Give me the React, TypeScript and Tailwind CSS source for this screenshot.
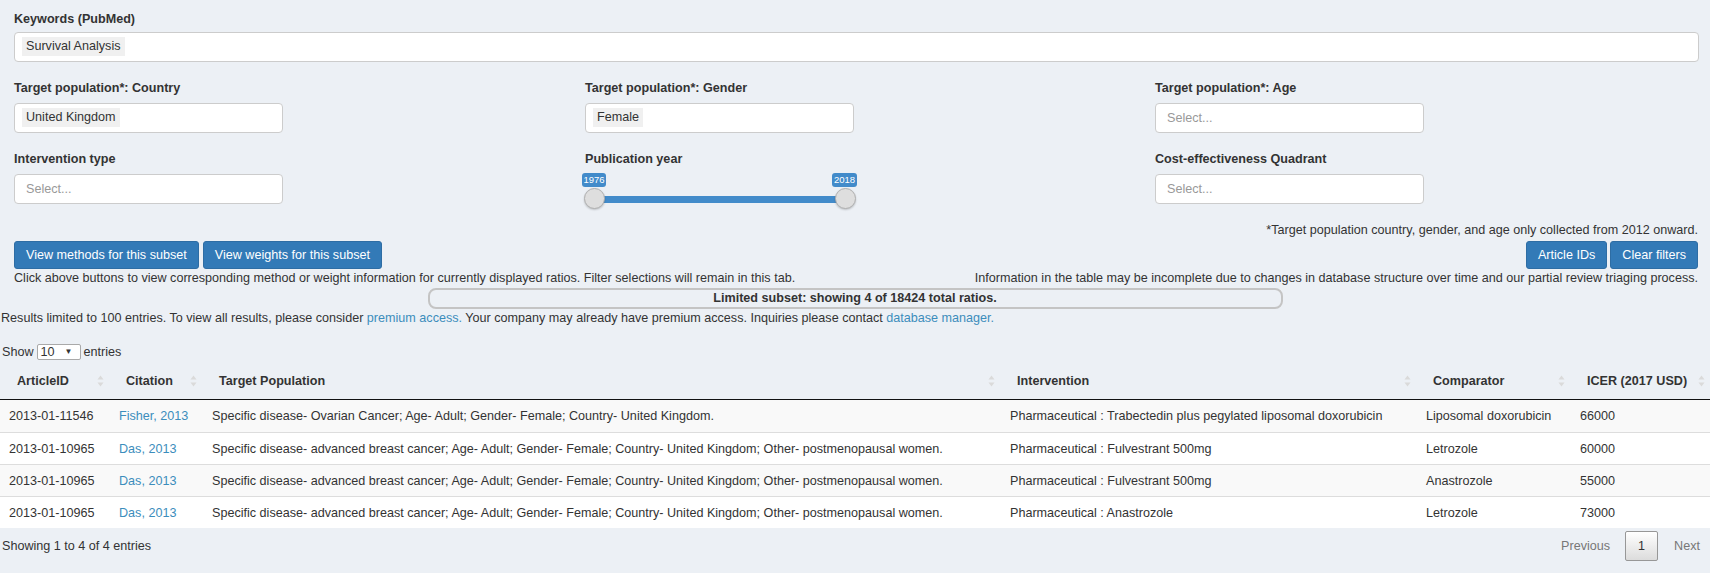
import React from "react";

type Row = { id: string; cite: string; pop: string; int: string; comp: string; icer: string };

const DAS_POP =
  "Specific disease- advanced breast cancer; Age- Adult; Gender- Female; Country- United Kingdom; Other- postmenopausal women.";

const rows: Row[] = [
  {
    id: "2013-01-11546",
    cite: "Fisher, 2013",
    pop: "Specific disease- Ovarian Cancer; Age- Adult; Gender- Female; Country- United Kingdom.",
    int: "Pharmaceutical : Trabectedin plus pegylated liposomal doxorubicin",
    comp: "Liposomal doxorubicin",
    icer: "66000",
  },
  { id: "2013-01-10965", cite: "Das, 2013", pop: DAS_POP, int: "Pharmaceutical : Fulvestrant 500mg", comp: "Letrozole", icer: "60000" },
  { id: "2013-01-10965", cite: "Das, 2013", pop: DAS_POP, int: "Pharmaceutical : Fulvestrant 500mg", comp: "Anastrozole", icer: "55000" },
  { id: "2013-01-10965", cite: "Das, 2013", pop: DAS_POP, int: "Pharmaceutical : Anastrozole", comp: "Letrozole", icer: "73000" },
];

const cols: [string, number][] = [
  ["ArticleID", 109],
  ["Citation", 93],
  ["Target Population", 798],
  ["Intervention", 416],
  ["Comparator", 154],
  ["ICER (2017 USD)", 140],
];

function Tag({ children }: { children: React.ReactNode }) {
  return <span className="inline-block h-[19px] bg-[#f0f0f0] px-[4px] leading-[19px]">{children}</span>;
}

function Field({ label, first, children }: { label: string; first?: boolean; children: React.ReactNode }) {
  return (
    <div className={first ? "pl-[14px]" : "pl-[15px]"}>
      <div className="h-[18px] font-bold">{label}</div>
      {children}
    </div>
  );
}

function Box({ children }: { children?: React.ReactNode }) {
  return (
    <div className="mt-[6px] h-[30px] w-[269px] rounded-[4px] border border-[#ccc] bg-white pl-[7px] pt-[4px]">
      {children}
    </div>
  );
}

function Placeholder() {
  return (
    <div className="mt-[6px] h-[30px] w-[269px] rounded-[4px] border border-[#ccc] bg-white pl-[11px] leading-[28px] text-[#999]">
      Select...
    </div>
  );
}

function SortBoth() {
  return (
    <svg width="7" height="13" viewBox="0 0 7 13" className="absolute right-[5px] top-1/2 -translate-y-1/2">
      <path d="M3.5 1 L6.5 5 L0.5 5 Z" fill="#dadada" />
      <path d="M3.5 12 L6.5 8 L0.5 8 Z" fill="#dadada" />
    </svg>
  );
}

function YearSlider() {
  return (
    <div className="relative h-[36px] w-[269px]">
      <div className="absolute left-[-3px] top-[5px] h-[14px] w-[24px] rounded-[3px] bg-[#428bca] text-center text-[9.5px] leading-[14px] text-white">
        1976
      </div>
      <div className="absolute left-[247px] top-[5px] h-[14px] w-[25px] rounded-[3px] bg-[#428bca] text-center text-[9.5px] leading-[14px] text-white">
        2018
      </div>
      <div className="absolute left-[9px] top-[28px] h-[7px] w-[251px] bg-[#428bca]" />
      <div className="absolute left-[-1px] top-[20px] h-[21px] w-[21px] rounded-full border border-[#b0b0b0] bg-[#dedede] shadow-[0_1px_2px_rgba(0,0,0,0.2)]" />
      <div className="absolute left-[250px] top-[20px] h-[21px] w-[21px] rounded-full border border-[#b0b0b0] bg-[#dedede] shadow-[0_1px_2px_rgba(0,0,0,0.2)]" />
    </div>
  );
}

export default function App() {
  return (
    <div className="min-h-[573px] w-full bg-[#ecf0f5] font-['Liberation_Sans',Arial,sans-serif] text-[12.6px] leading-[18px] text-[#333]">
      <div className="pl-[14px] pr-[11px] pt-[10px]">
        <div className="h-[18px] font-bold">Keywords (PubMed)</div>
        <div className="mt-[4px] h-[30px] rounded-[4px] border border-[#ccc] bg-white pl-[7px] pt-[4px]">
          <Tag>Survival Analysis</Tag>
        </div>
      </div>

      <div className="mt-[17px] grid grid-cols-3">
        <Field first label="Target population*: Country">
          <Box>
            <Tag>United Kingdom</Tag>
          </Box>
        </Field>
        <Field label="Target population*: Gender">
          <Box>
            <Tag>Female</Tag>
          </Box>
        </Field>
        <Field label="Target population*: Age">
          <Placeholder />
        </Field>
      </div>

      <div className="mt-[17px] grid grid-cols-3">
        <Field first label="Intervention type">
          <Placeholder />
        </Field>
        <Field label="Publication year">
          <YearSlider />
        </Field>
        <Field label="Cost-effectiveness Quadrant">
          <Placeholder />
        </Field>
      </div>

      <div className="mt-[17px] flex items-end justify-between pl-[14px] pr-[12px]">
        <div>
          <div className="flex gap-[4px]">
            <button className="h-[28px] rounded-[3px] border border-[#2e6da4] bg-[#337ab7] px-[11px] text-white">
              View methods for this subset
            </button>
            <button className="h-[28px] rounded-[3px] border border-[#2e6da4] bg-[#337ab7] px-[11px] text-white">
              View weights for this subset
            </button>
          </div>
          <div>
            Click above buttons to view corresponding method or weight information for currently displayed ratios. Filter
            selections will remain in this tab.
          </div>
        </div>
        <div className="text-right">
          <div>*Target population country, gender, and age only collected from 2012 onward.</div>
          <div className="mt-[2px] flex justify-end gap-[3px]">
            <button className="h-[28px] rounded-[3px] border border-[#2e6da4] bg-[#337ab7] px-[11px] text-white">
              Article IDs
            </button>
            <button className="h-[28px] rounded-[3px] border border-[#2e6da4] bg-[#337ab7] px-[11px] text-white">
              Clear filters
            </button>
          </div>
          <div>
            Information in the table may be incomplete due to changes in database structure over time and our partial
            review triaging process.
          </div>
        </div>
      </div>

      <div className="mx-auto mt-[1px] h-[21px] w-[855px] rounded-[8px] border-2 border-[#c4c4c4] text-center font-bold leading-[17px]">
        Limited subset: showing 4 of 18424 total ratios.
      </div>

      <div className="pl-[1px]">
        Results limited to 100 entries. To view all results, please consider{" "}
        <a className="text-[#3c8dbc]">premium access.</a> Your company may already have premium access. Inquiries please
        contact <a className="text-[#3c8dbc]">database manager.</a>
      </div>

      <div className="mt-[16px] flex h-[18px] items-center pl-[2px]">
        <span>Show</span>
        <span className="mx-[3px] flex h-[16px] w-[44px] items-center justify-between rounded-[2px] border border-[#a9a9a9] bg-white pl-[3px] pr-[7px] leading-[14px]">
          <span>10</span>
          <span className="text-[8px]">▼</span>
        </span>
        <span>entries</span>
      </div>

      <table className="mt-[2px] w-full table-fixed border-separate border-spacing-0">
        <colgroup>
          {cols.map(([n, w]) => (
            <col key={n} style={{ width: w }} />
          ))}
        </colgroup>
        <thead>
          <tr>
            {cols.map(([n]) => (
              <th key={n} className="relative h-[37px] border-b border-[#111] py-0 pl-[17px] pr-[18px] text-left font-bold">
                {n}
                <SortBoth />
              </th>
            ))}
          </tr>
        </thead>
        <tbody>
          {rows.map((r, i) => {
            const bg = i % 2 === 0 ? "bg-[#f9f9f9]" : "bg-white";
            const bt = i === 0 ? "" : "border-t border-[#ddd]";
            const td = `h-[32px] py-0 px-[10px] whitespace-nowrap overflow-hidden ${bg} ${bt}`;
            return (
              <tr key={i}>
                <td className={`${td} pl-[9px]`}>{r.id}</td>
                <td className={td}>
                  <a className="text-[#3c8dbc]">{r.cite}</a>
                </td>
                <td className={td}>{r.pop}</td>
                <td className={td}>{r.int}</td>
                <td className={td}>{r.comp}</td>
                <td className={td}>{r.icer}</td>
              </tr>
            );
          })}
        </tbody>
      </table>

      <div className="flex h-[33px] items-end justify-between pl-[2px] pr-[10px]">
        <div className="mb-[6px]">Showing 1 to 4 of 4 entries</div>
        <div className="flex items-center text-[#777]">
          <span>Previous</span>
          <span className="ml-[15px] flex h-[30px] w-[33px] items-center justify-center rounded-[2px] border border-[#979797] bg-gradient-to-b from-white to-[#dcdcdc] text-[#333]">
            1
          </span>
          <span className="ml-[16px]">Next</span>
        </div>
      </div>
    </div>
  );
}
